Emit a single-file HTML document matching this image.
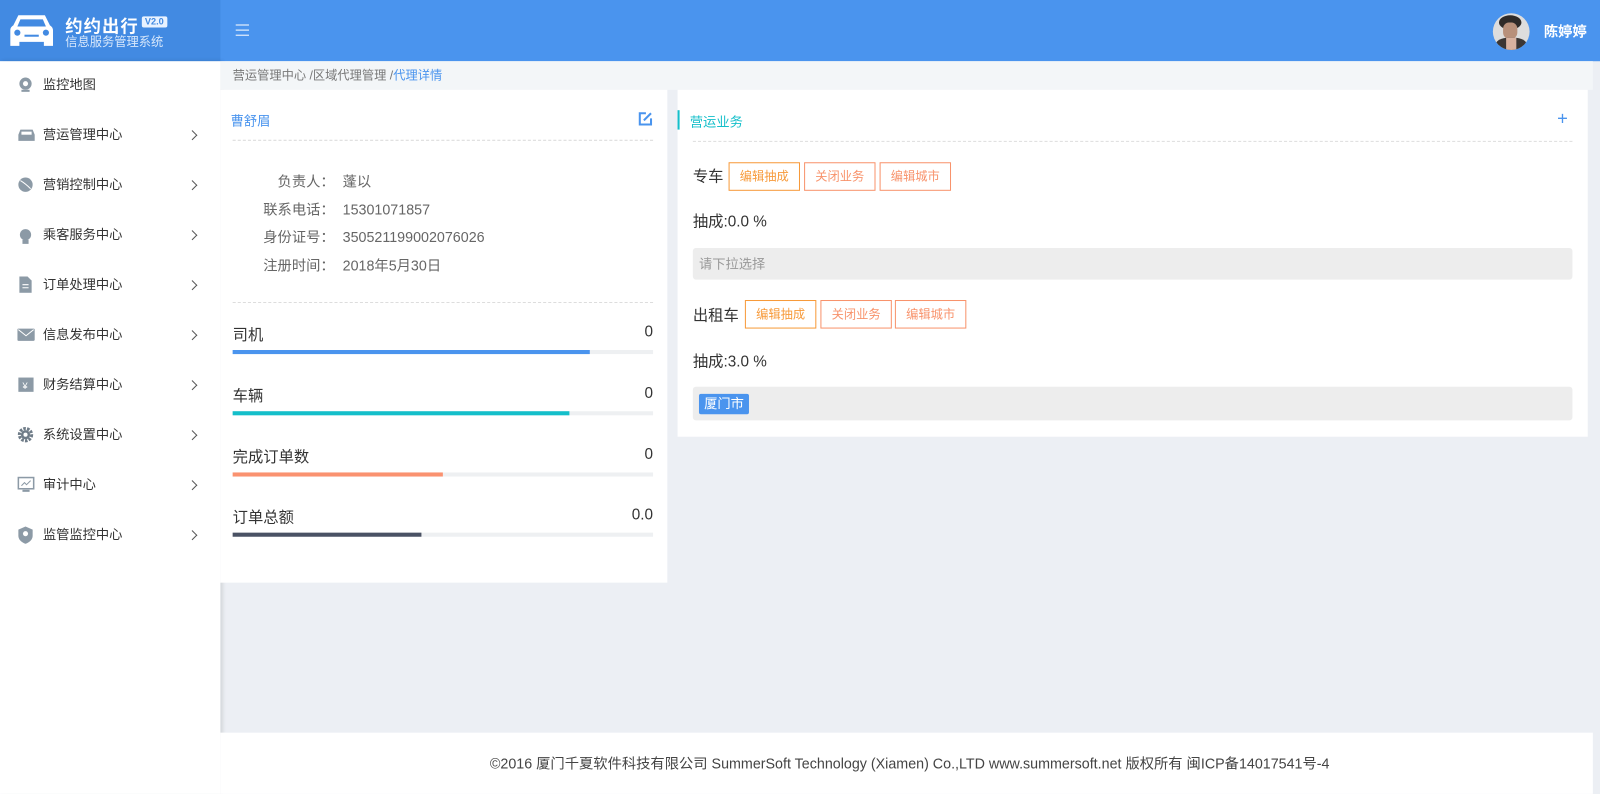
<!DOCTYPE html>
<html><head><meta charset="utf-8"><style>
*{margin:0;padding:0;box-sizing:border-box}
body{width:1600px;height:794px;overflow:hidden;background:#eceff4;font-family:"Liberation Sans","Noto Sans CJK SC",sans-serif;position:relative;color:#333}
#w{position:absolute;left:0;top:0;width:1568px;height:778px;transform:scale(1.020408);transform-origin:0 0}
.a{position:absolute}
#top{left:0;top:0;width:1568px;height:60px;background:#4a94ee}
#logo{left:0;top:0;width:216px;height:60px;background:#428ae2}
#side{left:0;top:60px;width:216px;height:718px;background:#fff;box-shadow:2px 0 4px rgba(0,0,0,.12)}
.mi{position:absolute;left:0;width:216px;height:20px;font-size:13px;color:#333;line-height:20px}
.mi span{position:absolute;left:42px}
.mi svg{position:absolute;left:17px;top:2px}
.mi i{position:absolute;left:185px;top:7px;width:7px;height:7px;border-right:1.3px solid #555;border-top:1.3px solid #555;transform:rotate(45deg)}
.card{background:#fff}
.dash{border-top:1px dashed #ddd}
.lbl{font-size:14px;color:#666}
.btn{position:absolute;height:28px;border:1px solid #f79a3a;color:#f79a3a;font-size:12px;line-height:26px;text-align:center;width:70px}
.btn.r{border-color:#f8936c;color:#f8936c}
.bar{position:absolute;left:228px;width:412px;height:4px;background:#eef0f2}
.bar b{position:absolute;left:0;top:0;height:4px}
.st{position:absolute;left:228px;width:412px;font-size:15px;color:#333}
.st em{font-style:normal;float:right}
</style></head><body><div id="w">
<div class="a" id="top"></div>
<div class="a" id="logo">
<svg class="a" style="left:10px;top:13px" width="42" height="34" viewBox="0 0 42 34"><path d="M8 2h26l5 10c2 1 3 3 3 5v15h-9v-4H9v4H0V17c0-2 1-4 3-5z" fill="#fff"/><path d="M10 6h22l3 7H7z" fill="#428ae2"/><circle cx="7" cy="19" r="3" fill="#428ae2"/><circle cx="35" cy="19" r="3" fill="#428ae2"/><rect x="14" y="21" width="14" height="2" fill="#428ae2"/></svg>
<div class="a" style="left:64px;top:12px;color:#fff;font-size:17px;font-weight:bold;letter-spacing:1px">约约出行</div>
<div class="a" style="left:139px;top:16px;background:#e8f2ff;color:#428ae2;font-size:9px;font-weight:bold;padding:0 3px;line-height:11px;border-radius:2px">V2.0</div>
<div class="a" style="left:64px;top:32px;color:#d8e8fb;font-size:12px">信息服务管理系统</div>
</div>
<div class="a" style="left:231px;top:24px;width:13px;height:11px;border-top:1.5px solid #fff;border-bottom:1.5px solid #fff"><div style="margin-top:3.5px;border-top:1.5px solid #fff"></div></div>
<div class="a" style="left:1463px;top:13px;width:36px;height:36px;border-radius:50%;background:#ddd;overflow:hidden"><div class="a" style="left:6px;top:2px;width:22px;height:14px;border-radius:50%;background:#2e2a28"></div><div class="a" style="left:10px;top:9px;width:14px;height:16px;border-radius:40%;background:#b8907a"></div><div class="a" style="left:3px;top:24px;width:30px;height:16px;border-radius:40%;background:#3b3634"></div><div class="a" style="left:13px;top:24px;width:10px;height:12px;background:#d8b2a0"></div></div>
<div class="a" style="left:1513px;top:21px;color:#fff;font-size:14px;font-weight:bold">陈婷婷</div>

<div class="a" id="side">
<div class="mi" style="top:13px"><svg width="16" height="16"><circle cx="8" cy="7" r="6" fill="#8c9aa6"/><circle cx="8" cy="7" r="2.5" fill="#fff"/><rect x="4" y="13" width="8" height="2" fill="#8c9aa6"/></svg><span>监控地图</span></div>
<div class="mi" style="top:62px"><svg width="18" height="16"><path d="M3 3h12l2 5v6H1V8z" fill="#8c9aa6"/><rect x="4" y="5" width="10" height="3" fill="#fff"/></svg><span>营运管理中心</span><i></i></div>
<div class="mi" style="top:111px"><svg width="16" height="16"><circle cx="8" cy="8" r="7" fill="#8c9aa6"/><path d="M3 4q5 3 10 8" stroke="#fff" fill="none"/></svg><span>营销控制中心</span><i></i></div>
<div class="mi" style="top:160px"><svg width="16" height="18"><circle cx="8" cy="8" r="5.5" fill="#8c9aa6"/><rect x="5" y="13" width="6" height="4" fill="#8c9aa6"/></svg><span>乘客服务中心</span><i></i></div>
<div class="mi" style="top:209px"><svg width="16" height="16"><path d="M2 0h8l4 4v12H2z" fill="#8c9aa6"/><path d="M5 8h6M5 11h6" stroke="#fff"/></svg><span>订单处理中心</span><i></i></div>
<div class="mi" style="top:258px"><svg width="18" height="16"><rect x="0" y="2" width="17" height="12" rx="1" fill="#8c9aa6"/><path d="M1 3l7.5 6L16 3" stroke="#fff" fill="none"/></svg><span>信息发布中心</span><i></i></div>
<div class="mi" style="top:307px"><svg width="16" height="16"><rect x="1" y="1" width="15" height="14" fill="#8c9aa6"/><text x="5" y="12" font-size="9" fill="#fff">¥</text></svg><span>财务结算中心</span><i></i></div>
<div class="mi" style="top:356px"><svg width="16" height="16"><circle cx="8" cy="8" r="6" fill="none" stroke="#6f7c88" stroke-width="3" stroke-dasharray="2.5 1.2"/><circle cx="8" cy="8" r="4.5" fill="#6f7c88"/><circle cx="8" cy="8" r="2" fill="#fff"/></svg><span>系统设置中心</span><i></i></div>
<div class="mi" style="top:405px"><svg width="18" height="16"><rect x="1" y="1" width="15" height="11" fill="none" stroke="#8c9aa6" stroke-width="1.5"/><path d="M4 9l3-3 2 2 4-4" stroke="#8c9aa6" fill="none"/><rect x="5" y="13" width="7" height="2" fill="#8c9aa6"/></svg><span>审计中心</span><i></i></div>
<div class="mi" style="top:454px"><svg width="16" height="17"><path d="M8 0l7 3v6q0 5-7 8-7-3-7-8V3z" fill="#8c9aa6"/><circle cx="8" cy="7" r="2.5" fill="#fff"/></svg><span>监管监控中心</span><i></i></div>
</div>

<div class="a" style="left:216px;top:60px;width:1345px;height:28px;background:#f3f6f8;font-size:12px;line-height:28px;padding-left:12px;color:#777">营运管理中心 /区域代理管理 /<span style="color:#4a94ee">代理详情</span></div>

<div class="a card" style="left:216px;top:88px;width:438px;height:483px"></div>
<div class="a" style="left:226px;top:108px;font-size:13px;color:#4a94ee">曹舒眉</div>
<svg class="a" style="left:625px;top:109px" width="15" height="15"><path d="M8 2H2v11h11V7" stroke="#4a94ee" stroke-width="2" fill="none"/><path d="M6 9l7-7" stroke="#4a94ee" stroke-width="2"/></svg>
<div class="a dash" style="left:228px;top:137px;width:412px"></div>
<div class="a lbl" style="left:272px;top:168px">负责人：&nbsp;&nbsp;蓬以</div>
<div class="a lbl" style="left:258px;top:195px">联系电话：&nbsp;&nbsp;15301071857</div>
<div class="a lbl" style="left:258px;top:222px">身份证号：&nbsp;&nbsp;350521199002076026</div>
<div class="a lbl" style="left:258px;top:250px">注册时间：&nbsp;&nbsp;2018年5月30日</div>
<div class="a dash" style="left:228px;top:296px;width:412px"></div>
<div class="st" style="top:317px">司机<em>0</em></div><div class="bar" style="top:343px"><b style="width:350px;background:#4a94ee"></b></div>
<div class="st" style="top:377px">车辆<em>0</em></div><div class="bar" style="top:403px"><b style="width:330px;background:#14bfca"></b></div>
<div class="st" style="top:437px">完成订单数<em>0</em></div><div class="bar" style="top:463px"><b style="width:206px;background:#fa9270"></b></div>
<div class="st" style="top:496px">订单总额<em>0.0</em></div><div class="bar" style="top:522px"><b style="width:185px;background:#4a5264"></b></div>

<div class="a card" style="left:664px;top:88px;width:892px;height:340px"></div>
<div class="a" style="left:664px;top:108px;width:2px;height:19px;background:#14bfca"></div>
<div class="a" style="left:676px;top:109px;font-size:13px;color:#14bfca">营运业务</div>
<div class="a" style="left:1526px;top:106px;font-size:18px;color:#4a94ee">+</div>
<div class="a dash" style="left:679px;top:138px;width:862px"></div>
<div class="a" style="left:679px;top:162px;font-size:15px">专车</div>
<div class="btn" style="left:714px;top:159px">编辑抽成</div>
<div class="btn r" style="left:788px;top:159px">关闭业务</div>
<div class="btn r" style="left:862px;top:159px">编辑城市</div>
<div class="a" style="left:679px;top:206px;font-size:15px">抽成:0.0 %</div>
<div class="a" style="left:679px;top:243px;width:862px;height:31px;background:#ededed;border-radius:3px;font-size:13px;color:#999;line-height:31px;padding-left:6px">请下拉选择</div>
<div class="a" style="left:679px;top:298px;font-size:15px">出租车</div>
<div class="btn" style="left:730px;top:294px">编辑抽成</div>
<div class="btn r" style="left:804px;top:294px">关闭业务</div>
<div class="btn r" style="left:877px;top:294px">编辑城市</div>
<div class="a" style="left:679px;top:343px;font-size:15px">抽成:3.0 %</div>
<div class="a" style="left:679px;top:379px;width:862px;height:33px;background:#ededed;border-radius:3px"></div>
<div class="a" style="left:685px;top:386px;background:#4a94ee;color:#fff;font-size:13px;line-height:20px;padding:0 5px;border-radius:2px">厦门市</div>

<div class="a" style="left:216px;top:718px;width:1345px;height:60px;background:#fff;text-align:center;line-height:60px;font-size:14px;color:#444;padding-left:6px">©2016 厦门千夏软件科技有限公司 SummerSoft Technology (Xiamen) Co.,LTD www.summersoft.net 版权所有 闽ICP备14017541号-4</div>
</div></body></html>
